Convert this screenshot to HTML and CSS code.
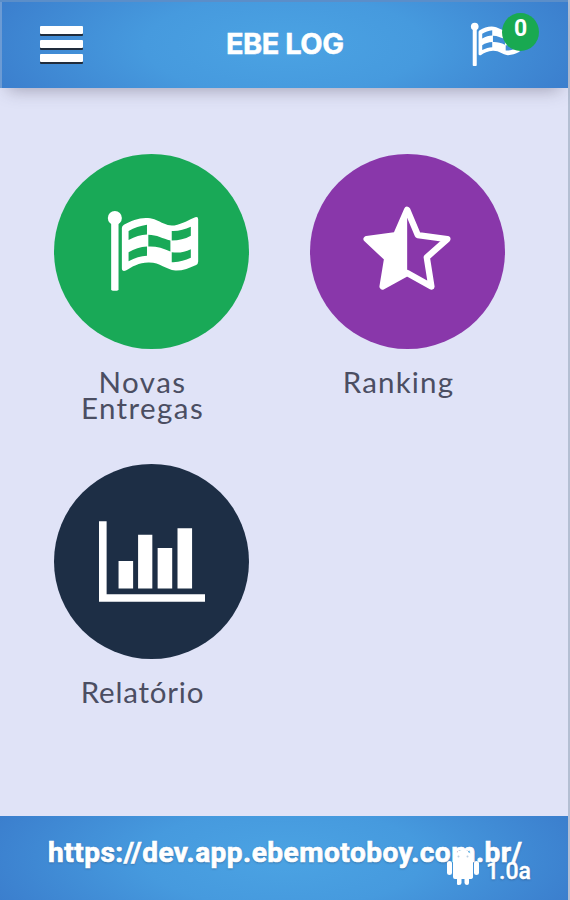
FILE: index.html
```html
<!DOCTYPE html>
<html lang="pt-BR">
<head>
<meta charset="utf-8">
<title>EBE LOG</title>
<link rel="stylesheet" href="styles.css">
</head>
<body>
<svg class="defs" aria-hidden="true">
  <symbol id="flag" viewBox="50 45 280 245">
    <circle cx="76" cy="69" r="21"/>
    <path d="M65 80H87V282Q87 286 82 286H70Q65 286 65 282Z"/>
    <path fill-rule="evenodd" d="M97 99Q97 93 103 89C130 73 165 62 194 73C221 84 232 94 254 91C279 87 298 74 316 67Q325 64 325 73V199Q325 206 319 209C299 218 277 227 257 226C227 223 211 201 176 202C148 202 127 215 109 226Q97 230 97 219Z
      M117 108V135C136 124 154 119 172 118V89C152 92 134 98 117 108Z
      M176 119V154C200 153 220 159 242 169V136C219 131 202 119 176 119Z
      M246 108V136C268 136 285 132 303 122V95C284 103 267 109 246 108Z
      M117 171V198C136 188 154 183 172 182V154C152 155 134 161 117 171Z
      M246 171V201C268 202 285 196 303 188V162C284 171 267 174 246 171Z"/>
  </symbol>
</svg>
<div class="app">
  <header class="bar top">
    <div class="menu"><i></i><i></i><i></i></div>
    <h1 class="title">EBE LOG</h1>
    <div class="alerts">
      <svg class="flag-small"><use href="#flag"/></svg>
      <span class="badge">0</span>
    </div>
  </header>
  <main class="grid">
    <section class="item">
      <div class="disc green"><svg class="flag-large"><use href="#flag"/></svg></div>
      <div class="label">
        <span class="novas">Novas</span>
        <span class="entregas">Entregas</span>
      </div>
    </section>
    <section class="item">
      <div class="disc purple">
        <svg class="star" viewBox="54 42 268 258">
          <path class="outline" d="M187 56L219 132L308 144L246 199L260 287L187 246L113 287L127 202L65 144L154 132Z"/>
          <path class="half" d="M187 56V246L113 287L127 202L65 144L154 132Z"/>
        </svg>
      </div>
      <div class="label"><span class="ranking">Ranking</span></div>
    </section>
    <section class="item">
      <div class="disc navy">
        <svg class="chart" viewBox="40 33 320 243"><path d="M40 33H63V253H360V276H40ZM99 153H143V236H99ZM158 74H201V236H158ZM217 114H261V236H217ZM277 54H321V236H277Z"/></svg>
      </div>
      <div class="label"><span class="relatorio">Relatório</span></div>
    </section>
  </main>
  <footer class="bar bottom">
    <span class="url">https://dev.app.ebemotoboy.com.br/</span>
    <div class="version">
      <svg class="android" viewBox="0 0 32 37">
        <path d="M6 12C6 7 8 4 11 3L9 0L12 2Q16 1 20 2L23 0L21 3C24 4 26 7 26 12ZM6 12H26V28Q26 30 23 30H22V34Q22 36 20 36T17.500 34V30H14.500V34Q14.500 36 12 36T10 34V30H8Q6 30 6 28ZM0 14Q0 12 2.500 12T5 14V24Q5 26 2.500 26T0 24ZM27 14Q27 12 29.500 12T32 14V24Q32 26 29.500 26T27 24Z"/>
        <circle class="eye" cx="11.500" cy="7.500" r="1"/><circle class="eye" cx="20.500" cy="7.500" r="1"/>
      </svg>
      <span class="number">1.0a</span>
    </div>
  </footer>
</div>
</body>
</html>
```
FILE: styles.css
```css
* { box-sizing: border-box; }
body { margin: 0; background: #e0e3f7; }
.defs { position: absolute; width: 0; height: 0; }
svg { display: block; fill: #fff; }
.app {
  width: 570px;
  height: 900px;
  display: flex;
  flex-direction: column;
  overflow: hidden;
  background: linear-gradient(to right, transparent 568px, #b4bfd3 568px);
}
.bar {
  position: relative;
  flex: none;
  width: 568px;
  color: #fff;
  background: radial-gradient(ellipse 310px 110px at 50% 50%, #4ba3e3 0%, #469ade 45%, #3b7ecd 100%);
}
.top {
  height: 88px;
  display: flex;
  justify-content: space-between;
  padding: 22px 28px 0 40px;
  border-top: 2px solid #5b8ec9;
  box-shadow: 0 10px 16px -8px rgba(70, 65, 85, .4), inset 2px 0 0 #6c9bd4;
}
.menu { width: 43px; padding-top: 2px; }
.menu i {
  display: block;
  height: 8px;
  margin-bottom: 6px;
  border-radius: 1px;
  background: #fff;
  box-shadow: 0 2px 0 #202c3c;
}
.title {
  margin: 6px 0 0 29px;
  width: 130px;
  font: 700 29px/28px Inter, sans-serif;
  letter-spacing: -.5px;
  -webkit-text-stroke: .5px #fff;
  white-space: nowrap;
}
.alerts { position: relative; width: 70px; }
.flag-small { width: 51px; height: 45px; margin-top: -2px; }
.badge {
  position: absolute;
  left: 32px;
  top: -11px;
  width: 37px;
  height: 38px;
  border-radius: 50%;
  background: #19a951;
  font: 700 23px/31px Roboto, sans-serif;
  text-align: center;
}
.grid {
  flex: 1;
  display: grid;
  grid-template-columns: 195px 195px;
  grid-template-rows: 310px 310px;
  column-gap: 61px;
  padding: 66px 0 0 54px;
  height: 728px;
}
.disc {
  width: 195px;
  height: 195px;
  border-radius: 50%;
  display: grid;
  place-items: center;
}
.green { background: #19a957; }
.purple { background: #8937aa; }
.navy { background: #1d2e45; }
.flag-large { width: 94px; height: 82px; margin: 0 0 1px 3px; }
.star { width: 89px; height: 86px; margin: 0 0 7px 0; }
.outline { fill: none; stroke: #fff; stroke-width: 19; stroke-linejoin: round; }
.half { stroke: none; }
.chart { width: 106px; height: 81px; }
.label {
  width: 177px;
  padding-top: 20px;
  display: flex;
  flex-direction: column;
  align-items: center;
  font: 400 29.5px/26px Lato, sans-serif;
  color: #4b4e62;
}
.novas { letter-spacing: 1.5px; }
.entregas { letter-spacing: 1.4px; }
.ranking { letter-spacing: 1.2px; }
.relatorio { letter-spacing: .8px; }
.bottom { height: 84px; padding: 20px 0 0 48px; }
.url {
  display: block;
  font: 700 28px/34px Roboto, sans-serif;
  letter-spacing: .5px;
  -webkit-text-stroke: .7px #fff;
  white-space: nowrap;
  text-shadow: 0 1px 2px rgba(30, 60, 100, .5);
}
.version {
  position: absolute;
  left: 447px;
  top: 33px;
  display: flex;
  gap: 7px;
}
.android { width: 32px; height: 37px; }
.eye { fill: #b9cee0; }
.number {
  padding-top: 9px;
  font: 500 23px/28px Roboto, sans-serif;
  -webkit-text-stroke: .4px #fff;
  text-shadow: 0 1px 2px rgba(30, 60, 100, .5);
}
```
